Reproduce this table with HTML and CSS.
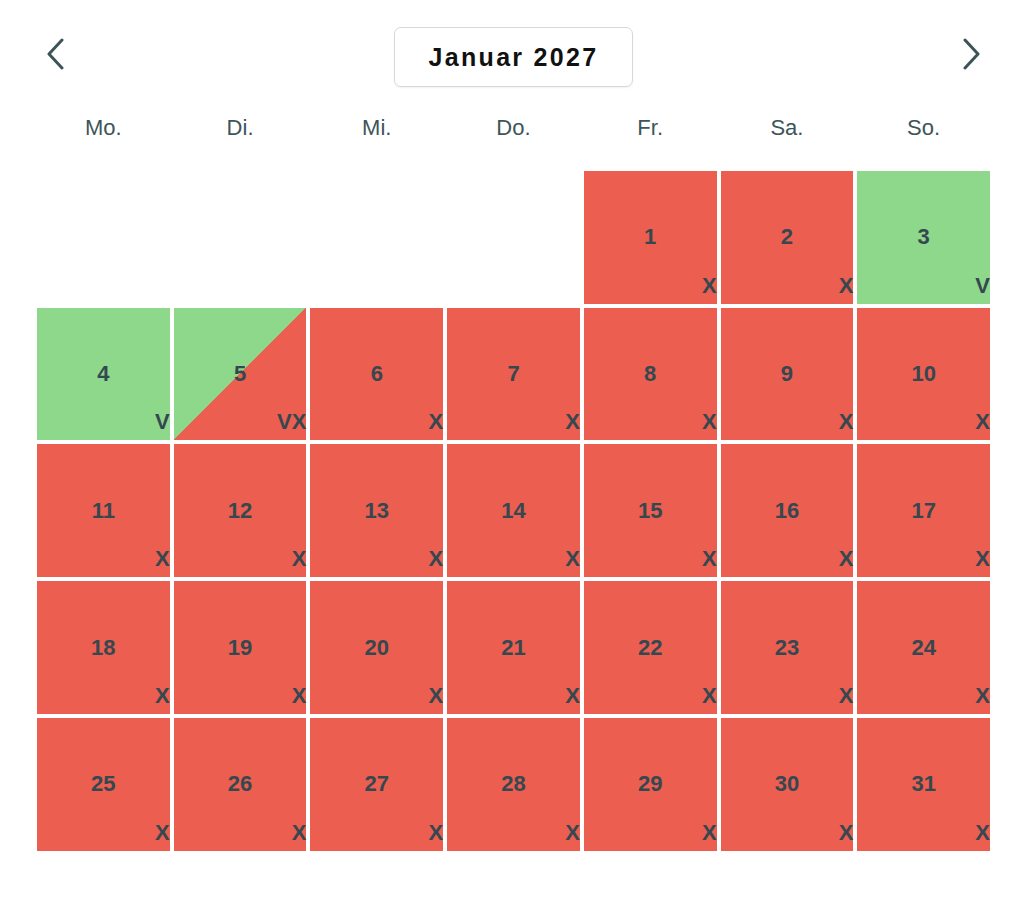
FILE: index.html
```html
<!DOCTYPE html>
<html lang="de">
<head>
<meta charset="utf-8">
<title>Januar 2027</title>
<link rel="stylesheet" href="styles.css">
</head>
<body>
<div class="calendar">
  <div class="header">
    <button class="nav nav-prev" aria-label="Vorheriger Monat">
      <svg width="18" height="32" viewBox="0 0 18 32"><polyline points="16,2 3,16 16,30" /></svg>
    </button>
    <div class="title">Januar 2027</div>
    <button class="nav nav-next" aria-label="Nächster Monat">
      <svg width="18" height="32" viewBox="0 0 18 32"><polyline points="2,2 15,16 2,30" /></svg>
    </button>
  </div>
  <div class="weekdays">
    <div>Mo.</div><div>Di.</div><div>Mi.</div><div>Do.</div><div>Fr.</div><div>Sa.</div><div>So.</div>
  </div>
  <div class="days">
    <div class="day empty"></div>
    <div class="day empty"></div>
    <div class="day empty"></div>
    <div class="day empty"></div>
    <div class="day no"><span class="num">1</span><span class="mark">X</span></div>
    <div class="day no"><span class="num">2</span><span class="mark">X</span></div>
    <div class="day yes"><span class="num">3</span><span class="mark">V</span></div>
    <div class="day yes"><span class="num">4</span><span class="mark">V</span></div>
    <div class="day split"><span class="num">5</span><span class="mark">VX</span></div>
    <div class="day no"><span class="num">6</span><span class="mark">X</span></div>
    <div class="day no"><span class="num">7</span><span class="mark">X</span></div>
    <div class="day no"><span class="num">8</span><span class="mark">X</span></div>
    <div class="day no"><span class="num">9</span><span class="mark">X</span></div>
    <div class="day no"><span class="num">10</span><span class="mark">X</span></div>
    <div class="day no"><span class="num">11</span><span class="mark">X</span></div>
    <div class="day no"><span class="num">12</span><span class="mark">X</span></div>
    <div class="day no"><span class="num">13</span><span class="mark">X</span></div>
    <div class="day no"><span class="num">14</span><span class="mark">X</span></div>
    <div class="day no"><span class="num">15</span><span class="mark">X</span></div>
    <div class="day no"><span class="num">16</span><span class="mark">X</span></div>
    <div class="day no"><span class="num">17</span><span class="mark">X</span></div>
    <div class="day no"><span class="num">18</span><span class="mark">X</span></div>
    <div class="day no"><span class="num">19</span><span class="mark">X</span></div>
    <div class="day no"><span class="num">20</span><span class="mark">X</span></div>
    <div class="day no"><span class="num">21</span><span class="mark">X</span></div>
    <div class="day no"><span class="num">22</span><span class="mark">X</span></div>
    <div class="day no"><span class="num">23</span><span class="mark">X</span></div>
    <div class="day no"><span class="num">24</span><span class="mark">X</span></div>
    <div class="day no"><span class="num">25</span><span class="mark">X</span></div>
    <div class="day no"><span class="num">26</span><span class="mark">X</span></div>
    <div class="day no"><span class="num">27</span><span class="mark">X</span></div>
    <div class="day no"><span class="num">28</span><span class="mark">X</span></div>
    <div class="day no"><span class="num">29</span><span class="mark">X</span></div>
    <div class="day no"><span class="num">30</span><span class="mark">X</span></div>
    <div class="day no"><span class="num">31</span><span class="mark">X</span></div>
  </div>
</div>
</body>
</html>
```

FILE: styles.css
```css
html, body {
  margin: 0;
  padding: 0;
  background: #ffffff;
}

body {
  font-family: "Liberation Sans", Arial, sans-serif;
  color: #35474f;
}

.calendar {
  width: 953px;
  margin-left: 37px;
  padding-top: 27px;
}

.header {
  display: grid;
  grid-template-columns: 1fr auto 1fr;
  align-items: center;
  height: 60px;
}

.nav {
  background: none;
  border: none;
  padding: 0;
  cursor: pointer;
  display: flex;
  align-items: center;
  margin-bottom: 6px;
}

.nav svg polyline {
  fill: none;
  stroke: #3b5458;
  stroke-width: 3;
  stroke-linecap: round;
  stroke-linejoin: round;
}

.nav-prev {
  justify-self: start;
  margin-left: 9px;
}

.nav-next {
  justify-self: end;
  margin-right: 9px;
}

.title {
  box-sizing: border-box;
  width: 239px;
  height: 60px;
  border: 1px solid #d8d8d8;
  border-radius: 7px;
  box-shadow: 0 1px 2px rgba(0, 0, 0, 0.06);
  display: flex;
  align-items: center;
  justify-content: center;
  font-size: 25px;
  font-weight: bold;
  letter-spacing: 2.3px;
  color: #111111;
}

.weekdays {
  display: grid;
  grid-template-columns: repeat(7, 1fr);
  column-gap: 4px;
  height: 82px;
  margin-bottom: 2px;
  align-items: center;
  text-align: center;
  font-size: 22px;
  color: #3d5558;
}

.days {
  display: grid;
  grid-template-columns: repeat(7, 1fr);
  gap: 4px;
}

.day {
  aspect-ratio: 1;
  display: grid;
  grid-template-rows: 1fr auto 1fr;
  grid-template-columns: 1fr;
  font-weight: bold;
}

.day.no {
  background: #eb5e50;
}

.day.yes {
  background: #8dd88a;
}

.day.split {
  background: linear-gradient(to bottom right, #8dd88a 50%, #eb5e50 50%);
}

.num {
  grid-row: 2;
  justify-self: center;
  font-size: 22px;
  line-height: 1;
}

.mark {
  grid-row: 3;
  align-self: end;
  justify-self: end;
  font-size: 22px;
  line-height: 1;
  padding-bottom: 7px;
  margin-right: 0;
}
```
